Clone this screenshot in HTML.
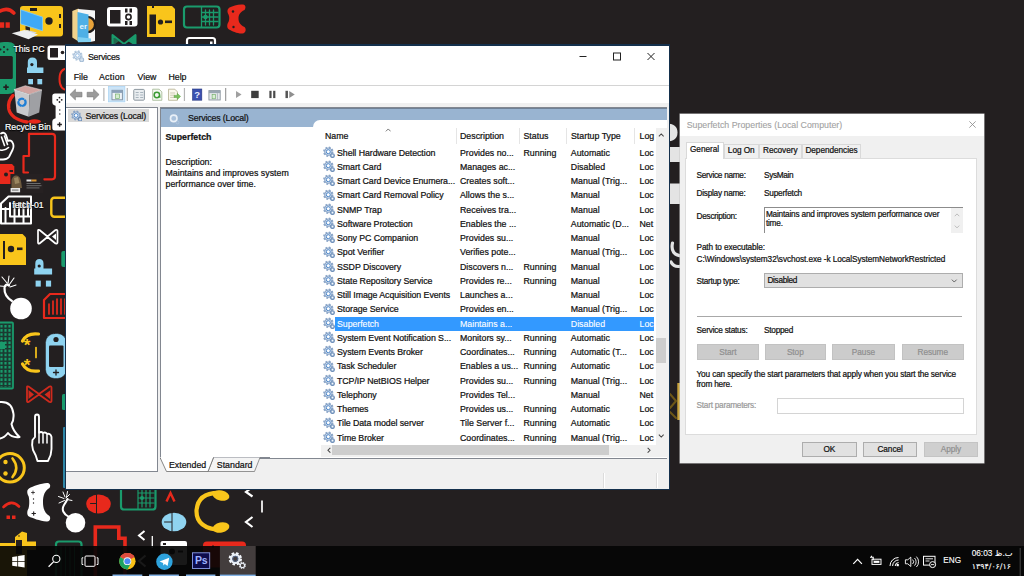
<!DOCTYPE html>
<html lang="en"><head><meta charset="utf-8"><title>Services</title>
<style>
html,body{margin:0;padding:0}
body{width:1024px;height:576px;overflow:hidden;background:#231f20;position:relative;font-family:"Liberation Sans",sans-serif;font-size:8.8px;color:#111;-webkit-text-stroke-width:.22px}
#desk{position:absolute;left:0;top:0;width:1024px;height:576px;overflow:hidden}
#desk svg.wall{position:absolute;left:0;top:0}
.dl{position:absolute;color:#fff;font-size:8.7px;text-align:center;white-space:nowrap;text-shadow:0 0 2px #000,0 1px 1px #000}
span,i,b,p{white-space:nowrap}
#svc{position:absolute;left:65px;top:44px;width:603px;height:444px;border:1px solid #14304c;background:#f0f0f0;overflow:hidden}
#svc .tb{position:absolute;left:0;top:0;width:603px;height:23px;background:#fff}
#svc .ttl{position:absolute;left:22px;top:6.5px;font-size:8.8px;letter-spacing:-.25px;line-height:11px}
#svc .ticon{position:absolute;left:6px;top:4.800px;width:12.500px;height:12.500px}
#svc .tb:before{content:"";position:absolute;left:0;top:0;width:603px;height:.7px;background:#14304c}
#svc .wc{position:absolute;left:500.200px;top:0;width:90px;height:23px}
#svc .menu{position:absolute;left:0;top:23px;width:603px;height:17.3px;background:#fff;border-bottom:1px solid #d4d4d4}
#svc .menu span{position:absolute;top:3.5px;line-height:11px}
#svc .tool{position:absolute;left:0;top:41.300px;width:603px;height:17.2px;background:#fff}
#svc .tool svg{position:absolute;left:0;top:0}
.tree{position:absolute;left:0;top:62.3px;width:90.500px;height:363px;background:#fff;border:1px solid #828790;border-left:0}
.tsel{position:absolute;left:2.4px;top:1px;width:80.600px;height:13px;background:#d9d9d9}
.g{position:absolute;left:10px;top:.2px;width:12px;height:12px}
.ttext{position:absolute;left:19.600px;top:2.4px;line-height:11px;letter-spacing:-.16px}
.rp{position:absolute;left:94px;top:62.3px;width:506px;height:349.500px;background:#fff;border:1px solid #828790;border-right:0}
.rph{position:absolute;left:0;top:0;width:506px;height:18.700px;background:#99b4d1;border-top:1px solid #6f8196;box-sizing:border-box}
.rph span{position:absolute;left:27px;top:4.2px;line-height:11px;letter-spacing:-.16px}
.rph .circ{position:absolute;left:7px;top:3.5px;width:13px;height:13px}
.desc{position:absolute;left:4.500px;top:23.5px;line-height:11px}
.desc b{font-size:8.8px}
.desc p{margin:13.8px 0 0 0;line-height:11px}
.list{position:absolute;left:152px;top:11.700px;width:354px;height:337.800px;background:#fff;border-top-left-radius:7px;overflow:hidden}
.hdr{position:absolute;left:0;top:0;width:355px;height:25px}
.hdr span{position:absolute;top:10.8px;line-height:11px}
.hdr i{position:absolute;top:8.5px;width:1px;height:16px;background:#e5e5e5}
.hdr .sort{position:absolute;left:71.5px;top:7.8px;width:6.5px;height:4px}
.row{position:absolute;left:0;width:342px;height:14.25px;line-height:14.25px}
.row span{position:absolute;top:0}
.c0{left:24px;letter-spacing:-.06px}.c1{left:147px}.c2{left:210.500px}.c3{left:257.800px}.c4{left:326.5px}
.row.sel:before{content:"";position:absolute;left:22.3px;top:.3px;width:318.700px;height:13.600px;background:#3399ff}
.row.sel span{color:#fff;-webkit-text-stroke-width:.1px}
.vs{position:absolute;left:342.500px;top:8px;width:11.500px;height:316.600px;background:#f0f0f0}
.vth{position:absolute;left:.5px;top:210.2px;width:10.400px;height:25.3px;background:#cdcdcd}
.va{position:absolute;left:2.2px;width:6.5px;height:4px}
.hs{position:absolute;left:8px;top:324.600px;width:346px;height:12px;background:#f0f0f0}
.hth{position:absolute;left:11.4px;top:.3px;width:276.600px;height:10.400px;background:#cdcdcd}
.ha{position:absolute;top:2.3px;width:4px;height:6.5px}
.tabs{position:absolute;left:94px;top:411.800px;width:110px;height:16px}
.tabt{position:absolute;top:414.500px;line-height:11px}
.sb{position:absolute;left:0;top:426.300px;width:603px;height:17px}
.sb i{position:absolute;top:1.5px;width:1px;height:15px;background:#dcdcdc;box-shadow:1px 0 0 #fff}
/* dialog */
#dlg{position:absolute;left:680px;top:114px;width:303.500px;height:348.500px;background:#f0f0f0;font-size:8.25px;letter-spacing:-.05px;box-shadow:0 0 0 .5px #c8c8c8}
.dtb{position:absolute;left:0;top:0;width:303.500px;height:22.3px;background:#fff}
.dtb span{position:absolute;left:6.7px;top:5.7px;line-height:11px;font-size:8.8px;color:#a3a3a3;letter-spacing:0;-webkit-text-stroke-width:.12px}
.dtb svg{position:absolute;left:287.500px;top:5.8px;width:9px;height:9px}
.dt{position:absolute;top:29.5px;height:14px;line-height:12.500px;text-align:center;border:1px solid #d9d9d9;border-bottom:0;box-sizing:border-box;background:#f0f0f0}
.dt.on{top:28px;height:16.500px;line-height:13.500px;background:#fff;z-index:2}
.page{position:absolute;left:5px;top:43.5px;width:291.500px;height:277.500px;background:#fff;box-shadow:inset 0 0 0 1px #dcdcdc}
.l{position:absolute;line-height:11px;letter-spacing:-.12px}
.l.w{letter-spacing:0}
.l.gray{color:#9a9a9a}
.dbox{position:absolute;left:78.900px;top:49.800px;width:199.400px;height:25.700px;border-top:1px solid #8c8c8c;border-left:1px solid #8c8c8c;background:#fff;box-sizing:border-box}
.dbox span{position:absolute;left:1px;top:1.3px;line-height:9.3px;white-space:nowrap;letter-spacing:-.2px}
.dsb{position:absolute;right:0;top:0;width:12px;height:24.700px;background:#f0f0f0}
.dsb svg{position:absolute;left:3px;width:6px;height:3.800px}
.combo{position:absolute;left:78.900px;top:115.600px;width:199.100px;height:15.3px;background:#e1e1e1;border:1px solid #adadad;box-sizing:border-box}
.combo span{position:absolute;left:2.5px;top:1.200px;line-height:11px;letter-spacing:-.3px}
.combo svg{position:absolute;left:186.500px;top:5px;width:6.5px;height:4px}
.sep{position:absolute;left:11.5px;top:158.800px;width:265.500px;height:1px;background:#a8a8a8}
.btn{position:absolute;text-align:center;box-sizing:border-box}
.btn.dis{background:#cccccc;color:#8f8f8f;border:.5px solid #c2c2c2}
.btn.ok{background:#e1e1e1;border:1px solid #adadad;color:#111}
.btn.dis2{background:#cfcfcf;color:#8f8f8f;border-color:#c4c4c4}
.inp{position:absolute;left:92.300px;top:240.200px;width:186.700px;height:16.700px;border:1px solid #d4d4d4;background:#fff;box-sizing:border-box}
/* taskbar */
#task{position:absolute;left:0;top:545.5px;width:1024px;height:30.500px;background:rgba(5,5,5,.92)}
#task svg.ts{position:absolute;left:0;top:0}
#task .eng{position:absolute;left:943.300px;top:9.700px;color:#fff;font-size:8.2px;-webkit-text-stroke-width:.1px;line-height:11px}
#task .clk{position:absolute;left:966px;width:46.500px;text-align:right;top:2.5px;color:#fff;font-size:8.3px;-webkit-text-stroke-width:.1px;line-height:11px;font-family:"Liberation Sans","DejaVu Sans",sans-serif}
#task .dat{position:absolute;left:966px;width:45px;text-align:right;top:15.8px;color:#fff;font-size:7.9px;-webkit-text-stroke-width:.1px;line-height:11px;font-family:"DejaVu Sans","Liberation Sans",sans-serif}

</style></head>
<body>
<div id="desk">
<svg class="wall" width="1024" height="576" viewBox="0 0 1024 576">
<g fill="none" stroke-linecap="round" stroke-linejoin="round">
<!-- top-left red sad face -->
<path d="M-1 11.500Q8 6.500 13.800 13" stroke="#e8291c" stroke-width="3.600"/>
<rect x="0" y="22.300" width="4.200" height="5.500" fill="#e8291c"/><rect x="5.600" y="22.300" width="4.200" height="5.500" fill="#e8291c"/>
<!-- yellow console -->
<rect x="20" y="6" width="43" height="30.500" rx="3" fill="#f9c51b"/>
<circle cx="49" cy="21" r="3.700" fill="#231f20"/><rect x="59" y="14" width="2" height="4" fill="#231f20"/><rect x="59" y="24" width="2" height="4" fill="#231f20"/><rect x="30" y="8" width="7" height="3" fill="#231f20"/>
<!-- this pc icon -->
<path d="M21 9.800L42.500 17.100V30.800L21 23.900Z" fill="#3fa9f5" stroke="#7fcbfa" stroke-width=".8"/>
<path d="M25.500 26L30 27.500V31L25.500 29.500Z" fill="#2a2626"/><path d="M27 30L37 32.500L33 34L24 31.500Z" fill="#d5d8da"/>
<path d="M11.700 33.200L24.500 30L38 34.500L28.500 39.300Z" fill="#eceeef"/>
<!-- folder icon -->
<path d="M72.300 11L78.500 8.500V41.500L72.300 37.500Z" fill="#f0d28c"/>
<path d="M78 9L95 10.500V41L90 42H78Z" fill="#f6f6f6"/>
<circle cx="87.500" cy="24.500" r="7.600" fill="#e8a33a" stroke="#1d1a1a" stroke-width="2.400"/>
<path d="M77.500 12L88.500 14.500V40.500L77.500 41.500Z" fill="#4eb0e6"/>
<path d="M78 37L91 38.500V42L78 42.300Z" fill="#7fd0f2"/>
<text x="83.300" y="29" font-family="Liberation Sans,sans-serif" font-size="8" font-weight="bold" fill="#e9f6fd" text-anchor="middle" stroke="none">er</text>
<!-- white handheld -->
<rect x="107" y="7" width="30.500" height="19.500" rx="3" fill="#fff"/>
<rect x="110" y="10" width="10.500" height="13.500" fill="#231f20"/><circle cx="128.500" cy="17" r="2.600" fill="#fff" stroke="#231f20" stroke-width="1.600"/>
<rect x="125" y="8.500" width="2.500" height="4" fill="#231f20"/><rect x="129.500" y="8.500" width="2.500" height="4" fill="#231f20"/><rect x="125" y="21" width="2.500" height="4" fill="#231f20"/><rect x="129.500" y="21" width="2.500" height="4" fill="#231f20"/>
<!-- yellow floppy -->
<path d="M147 6H172L175 9V37H147Z" fill="#f9c51b"/>
<rect x="149.500" y="14.500" width="6.500" height="19.500" fill="#231f20"/><circle cx="160.500" cy="22" r="2.600" fill="#231f20"/><rect x="165" y="20.500" width="7" height="2.600" fill="#231f20"/><rect x="152" y="6" width="2" height="2" fill="#231f20"/>
<!-- green mobile -->
<rect x="184" y="6.500" width="35.500" height="21" rx="3" stroke="#1a9b6c" stroke-width="2.200"/>
<path d="M201.500 7V27M205.500 10V25M209.500 10V25M213.500 10V25M202 12.500H218M202 17H218M202 21.500H218" stroke="#1a9b6c" stroke-width="1.300"/><circle cx="205.500" cy="17" r="2.300" fill="#1a9b6c"/>
<!-- red gamepad -->
<path d="M243 4.500C246 5 246 8 244.500 10C240 12 238.500 15 238.500 18.500C238.500 22 240 25 244.500 27C246.500 29 246 33 242.500 33.500C238 34 232 31 229 29.500C226.500 28 227 24 228.500 22C229.500 19 229.500 17 228.500 14.500C227 12 227 9 229.500 7.500C233 6 238 4 243 4.500Z" fill="#e8291c"/>
<circle cx="233" cy="11.500" r="1.200" fill="#231f20"/><circle cx="233.500" cy="27" r="1.200" fill="#231f20"/>
<!-- green hourglass rotated -->
<path d="M112.500 35L124 44L135.500 35V53L124 44L112.500 53Z" stroke="#1a9b6c" stroke-width="2"/><path d="M128 41L135.500 36V46Z" fill="#1a9b6c"/><path d="M112.500 36L119 41L112.500 46Z" fill="#1a9b6c" opacity=".6"/>
<!-- white handheld outline -->
<rect x="187" y="38" width="28" height="16" rx="2.500" stroke="#fff" stroke-width="2.200"/><rect x="210" y="41.500" width="2.500" height="2.500" fill="#fff"/>

<!-- left column -->
<!-- green psp vertical -->
<path d="M-4 49Q-4 42 4 42H8Q16 42 16 50V86Q16 94 8 94H-4Z" fill="#1a9b6c"/>
<rect x="-2" y="56" width="14.800" height="23" rx="1.500" fill="#231f20"/>
<circle cx="4" cy="47" r="1" fill="#231f20"/><circle cx="7.500" cy="49.500" r="1" fill="#231f20"/><circle cx="4" cy="52" r="1" fill="#231f20"/><circle cx=".5" cy="49.500" r="1" fill="#231f20"/>
<path d="M6 84.500V90M3.300 87.200H8.700" stroke="#231f20" stroke-width="1.700" stroke-linecap="butt"/>
<!-- :P top -->
<path d="M27.800 67.600V62Q27.800 57.400 32.400 57.400Q37 57.400 37 62V67.600H43.400V73H27V67.600Z" fill="#8fd3f0"/><circle cx="31.900" cy="64.600" r="1.600" fill="#231f20"/>
<rect x="28.200" y="79" width="4.800" height="5.300" fill="#8fd3f0"/><rect x="37.400" y="79" width="4.800" height="5.300" fill="#8fd3f0"/>
<!-- white handheld small -->
<rect x="47.500" y="45.500" width="26" height="14.500" rx="2.500" fill="#fff"/><rect x="50" y="48" width="8" height="9.500" fill="#231f20"/><circle cx="62.500" cy="52.500" r="1.800" fill="#231f20"/>
<!-- red outline -->
<path d="M68 68.500Q59.500 68.500 59.500 79Q59.500 90 68 90" stroke="#e8291c" stroke-width="2"/>
<!-- red headphone arc behind bin -->
<path d="M13 95.500Q7.500 101 8.800 109Q11 119 27 122" stroke="#e8291c" stroke-width="3.400"/>
<ellipse cx="34.500" cy="121.500" rx="6.500" ry="2.200" fill="#e8291c"/>
<!-- recycle bin -->
<path d="M14.300 89.500L25.300 85.700L42 90L29.600 94.300Z" fill="#d1a3a0"/>
<path d="M14.300 89.500L29.600 94.300L28.700 116.800L16.700 112.500Z" fill="#cfd0d3" opacity=".96"/>
<path d="M29.600 94.300L42 90L39.200 112.500L28.700 116.800Z" fill="#a4a6aa" opacity=".96"/>
<path d="M14.300 89.500L25.300 85.700L42 90L29.600 94.300Z" fill="none" stroke="#eee" stroke-width=".5"/>
<circle cx="22" cy="102.300" r="3.600" stroke="#1e7fd6" stroke-width="2.300" stroke-dasharray="4.500 2.200"/>
<!-- white gamepad right -->
<path d="M52.300 96Q52.300 93.400 55 93.400H70V130.500H55Q52.300 130.500 52.300 128V121.500Q52.300 119.500 54.300 118.800L55.600 118.300V105.800L54.300 105.300Q52.300 104.600 52.300 102.500Z" fill="#fff"/>
<circle cx="59.500" cy="97.600" r=".9" fill="#231f20"/><circle cx="59.500" cy="102" r=".9" fill="#231f20"/><circle cx="57.300" cy="99.800" r=".9" fill="#231f20"/><circle cx="61.700" cy="99.800" r=".9" fill="#231f20"/>
<circle cx="59.800" cy="110" r=".7" fill="#231f20"/><circle cx="59.800" cy="114" r=".7" fill="#231f20"/>
<path d="M57.300 124.500h4.600M59.600 122.200v4.600" stroke="#231f20" stroke-width="1.400" stroke-linecap="butt"/>
<!-- fist -->
<path d="M1 133.500Q4 131.500 6 135L8 141Q11 139.500 12.500 142.500Q14.500 146 12.500 150L9 157Q7 159.500 3 159.500H0" stroke="#fff" stroke-width="1.800"/>
<path d="M1.500 137L4.500 145.500M4.500 136L7.500 144.500M0 150Q5 151 8.500 147.500" stroke="#fff" stroke-width="1.600"/>
<!-- red tablet outline -->
<path d="M29 133.800H52Q55 133.800 55 136.800V176Q55 179.300 52 179.300H44M29 133.800V156H23.500V172.500H28" stroke="#e8291c" stroke-width="2.200"/>
<!-- red floppy partial -->
<path d="M0 164H12L14.300 166.500V184H0Z" fill="#e8291c"/><circle cx="6" cy="174.500" r="2" fill="#231f20"/><rect x="9.500" y="170" width="3.500" height="2" fill="#231f20"/>
<!-- fetch thumbnail -->
<rect x="10.400" y="174" width="33" height="19" fill="#262122"/>
<path d="M11.500 188V180Q13 175 16.500 175.500Q20 176 21 181L22 188Z" fill="#6e5a3e"/><path d="M14 178L18 177L19.500 183L15 184Z" fill="#9a8660"/>
<rect x="10.600" y="188" width="9.500" height="4.300" fill="#e6e6e6"/><rect x="12" y="189.300" width="6.500" height="1.600" fill="#9a9a9a"/>
<rect x="26.500" y="179.500" width="5" height="2" fill="#e2e2e2"/><rect x="31.500" y="179.500" width="5" height="2" fill="#d8932e"/><rect x="26.500" y="183" width="14" height="1" fill="#6c6c6c"/><rect x="26.500" y="185.200" width="15" height="1" fill="#6c6c6c"/><rect x="26.500" y="187.400" width="13" height="1" fill="#6c6c6c"/>
<!-- white grille -->
<path d="M1 203.500L8.500 196.500H31V223.500H1Z" stroke="#fff" stroke-width="2"/><path d="M5.500 208V223M10 203V216M14.500 203V223M19 203V216M23.500 203V223M28 203V216M1 209H10M10 216.500H31" stroke="#fff" stroke-width="2"/>
<!-- yellow outline -->
<rect x="51.300" y="197.800" width="22" height="19" rx="3" stroke="#f9c51b" stroke-width="2.400"/>
<!-- white hourglass -->
<path d="M38 230.500Q38 229.500 39.500 230L47.500 236.500L55.500 230Q57.500 229.500 57.500 231V242.500Q57.500 244 55.500 243.500L47.500 237L39.500 243.500Q38 244 38 242.500Z" stroke="#fff" stroke-width="1.700"/><path d="M52 236.500L56 233.500V240Z" fill="#fff"/>
<!-- yellow floppy 2 -->
<path d="M0 234H22.500L26 237.500V265H0Z" fill="#f9c51b"/><circle cx="11" cy="249" r="3.200" fill="#231f20"/><rect x="17" y="247.500" width="5.500" height="2.600" fill="#231f20"/><rect x="3" y="241" width="2" height="18" fill="#231f20"/>
<!-- green bit -->
<rect x="61.300" y="251" width="8" height="16" rx="2" fill="#1a9b6c"/>
<!-- :P 2 -->
<path d="M35.300 268.600V263.500Q35.300 258.900 39.400 258.900Q43.500 258.900 43.500 263.500V268.600H52.100V274.500H34.200V268.600Z" fill="#8fd3f0"/><circle cx="39.200" cy="266" r="1.600" fill="#231f20"/>
<rect x="35.600" y="280.600" width="5.200" height="6" fill="#8fd3f0"/><rect x="45.900" y="280.600" width="5.200" height="6" fill="#8fd3f0"/>
<!-- bomb -->
<circle cx="21" cy="308.500" r="10.800" fill="#fff"/><path d="M12 301Q4 296 4.500 288Q5 283 9 285.500" stroke="#fff" stroke-width="2.200"/>
<path d="M9 285L14 278M7 283L2 277M6 286.500L-1 286M10 287L16 285M8 283.500L9 276" stroke="#fff" stroke-width="1.100"/>
<!-- red sd card -->
<path d="M50 294H68V318H44V300Z" stroke="#e8291c" stroke-width="2.200"/><path d="M49 304V314M53 301V314M57 299V314M61 299V314M65 299V314" stroke="#e8291c" stroke-width="1.700"/>
<!-- green keyboard -->
<rect x="-2" y="322.500" width="15" height="66" rx="1" fill="#1b3a31" stroke="#1a9b6c" stroke-width="1.800"/>
<path d="M1.500 325V387M5.500 325V387M9.500 325V387" stroke="#1a9b6c" stroke-width="2.200" stroke-dasharray="2.600 1.500" stroke-linecap="butt"/>
<rect x="-1" y="342" width="6" height="7" fill="#1a9b6c"/>
<!-- yellow (*_*) -->
<path d="M38.500 334Q27 332.500 22.500 341M38.500 371Q27 372.500 22.500 364" stroke="#f9c51b" stroke-width="3.200"/><path d="M36 347.500V357.500" stroke="#f9c51b" stroke-width="1.700"/>
<text x="27" y="350.500" font-family="Liberation Sans,sans-serif" font-size="17" font-weight="bold" fill="#f9c51b" text-anchor="middle" stroke="none">*</text><text x="27" y="370.500" font-family="Liberation Sans,sans-serif" font-size="17" font-weight="bold" fill="#f9c51b" text-anchor="middle" stroke="none">*</text>
<!-- light blue psp -->
<rect x="45.500" y="333.500" width="21" height="45" rx="9" fill="#8fd3f0" stroke="#231f20" stroke-width=".5"/><rect x="49" y="345.500" width="14.500" height="21.500" rx="1" fill="#231f20"/>
<circle cx="56" cy="339.500" r="2.600" fill="#231f20"/><path d="M56 370v5M53.500 372.500h5" stroke="#231f20" stroke-width="1.300"/>
<!-- red hourglass -->
<path d="M27 387Q27 386 28.500 386.500L39 394L49.500 386.500Q51.500 386 51.500 387.500V401Q51.500 402.500 49.500 402L39 394.500L28.500 402Q27 402.500 27 401Z" stroke="#cf2a1d" stroke-width="1.800"/><path d="M44.500 394.500L50 390.500V399Z" fill="#cf2a1d"/><path d="M28.500 390L34 394.500L28.500 399Z" fill="#cf2a1d"/>
<!-- speech bubble -->
<path d="M0 402Q12 401 13.500 414Q14 420 11.500 424Q13 431 19.500 437Q12 438 8 433Q4 438 0 438.500" stroke="#fff" stroke-width="2"/>
<!-- pointing hand -->
<path d="M35 417Q35 414.500 37 414.500Q39 414.500 39 417V433Q41 431 43 433Q45.500 431.500 47 434Q50.500 433 51.500 437V449Q51.500 455 48 461H37.500Q36 455 33 450Q31.500 445 32.500 440L35 437Z" stroke="#fff" stroke-width="1.900"/><path d="M39 434V443M43 434V443M47 435V443" stroke="#fff" stroke-width="1.500"/>
<!-- yellow smiley -->
<circle cx="10" cy="467.800" r="14.300" stroke="#f9c51b" stroke-width="3"/><circle cx="5.500" cy="462" r="2.200" fill="#f9c51b"/><circle cx="5.500" cy="473.500" r="2.200" fill="#f9c51b"/><path d="M12.500 458.500Q20 468 12.500 477" stroke="#f9c51b" stroke-width="2.600"/>
<!-- white gamepad 2 -->
<path d="M47 483C50 482.500 51 486 49.500 488C45 490.500 43 495 43 502C43 509 45 513.500 49.500 516C51 518 50 522 46.500 521.500C40 521 32 518 29 516.500C26.500 515 27 511 28.500 508.500C29.500 505 29.500 499 28.500 496C27 493.500 26.500 490 29 488.500C33 486 41 483.500 47 483Z" fill="#fff"/>
<path d="M31.500 492.500h3M33 491v3" stroke="#231f20" stroke-width=".8"/><path d="M32 513.500h3.500M33.700 511.700v3.500" stroke="#231f20" stroke-width="1.100"/><circle cx="33.500" cy="499" r=".7" fill="#231f20"/><circle cx="33.500" cy="503" r=".7" fill="#231f20"/>
<!-- red sad 2 -->
<path d="M3.500 507Q11.500 499 19 506.500" stroke="#e8291c" stroke-width="2.600"/><rect x="6.500" y="515.500" width="3.500" height="3.500" fill="#e8291c"/><rect x="12" y="515.500" width="3.500" height="3.500" fill="#e8291c"/>
<!-- edge strips -->
<rect x="62" y="394" width="6" height="16" rx="1.500" fill="#1a9b6c"/>
<path d="M70 428H64V487H70" stroke="#2f86a6" stroke-width="2"/><path d="M64 434H70M64 440H70M64 446H70M64 452H70M64 458H70M64 464H70M64 470H70M64 476H70M64 482H70" stroke="#2f86a6" stroke-width=".8"/>

<!-- bottom strip -->
<circle cx="75.500" cy="522.800" r="9.800" fill="#fff"/><path d="M69 517Q60 512 64 505Q66 502 67.500 499" stroke="#fff" stroke-width="2"/>
<path d="M66 498L69.500 494.500M65 497L63 492M64 498.500L58.500 496.500M64.500 500.500L59 503M67 499.500L72 500.500M66.500 497L67.500 491.500" stroke="#fff" stroke-width="1"/>
<ellipse cx="98.500" cy="504" rx="12.300" ry="9.600" fill="#e8291c"/><path d="M96.500 494.500V513.500M90.500 503.500H96" stroke="#231f20" stroke-width="1"/>
<rect x="121" y="483" width="34.500" height="26.500" rx="3" stroke="#1a9b6c" stroke-width="2.200"/><path d="M138 484V509M142 490V507M146 490V507M150 490V507M138 493H154M138 498H154M138 503H154" stroke="#1a9b6c" stroke-width="1.200"/><circle cx="142" cy="498" r="2" fill="#1a9b6c"/>
<path d="M166.500 501.500L170.500 493L174.500 501.500" stroke="#e8291c" stroke-width="2.400" stroke-linejoin="miter" stroke-linecap="butt"/>
<ellipse cx="174" cy="522" rx="12.300" ry="9.300" fill="#8fd3f0"/><path d="M172 513V531M164.500 522H171.500" stroke="#231f20" stroke-width="1"/>
<!-- headphones -->
<path d="M222 493Q198 491.500 196.500 510.500Q196 529 222 530" stroke="#f9c51b" stroke-width="4.200"/>
<ellipse cx="221" cy="495.500" rx="8.500" ry="5" fill="#f9c51b" transform="rotate(12 221 495.500)"/><ellipse cx="221" cy="527.500" rx="8.500" ry="5" fill="#f9c51b" transform="rotate(-12 221 527.500)"/>
<!-- >_< -->
<path d="M252.500 487L246 492L252.500 496.500" stroke="#fff" stroke-width="2.200" stroke-linejoin="miter" stroke-linecap="butt"/><path d="M252.500 517L246 522L252.500 527" stroke="#fff" stroke-width="2.200" stroke-linejoin="miter" stroke-linecap="butt"/><path d="M262 500.500V512.500" stroke="#fff" stroke-width="1.700" stroke-linecap="butt"/>
<!-- red outline phone -->
<path d="M95.300 580V527H118.800V538.300H125V580" stroke="#e8291c" stroke-width="3.600" stroke-linejoin="miter"/>
<path d="M144.500 531L139 535.500L144.500 540" stroke="#fff" stroke-width="2" stroke-linejoin="miter" stroke-linecap="butt"/>
<path d="M145.500 555.500L139 561L145.500 566.500" stroke="#fff" stroke-width="2" stroke-linejoin="miter" stroke-linecap="butt"/><path d="M152.300 536V548" stroke="#fff" stroke-width="1.300" stroke-linecap="butt"/>
<!-- yellow joystick -->
<path d="M15 537L22 531.500L27 533V541.500H36V550H27V580H0V543H15Z" fill="#f9c51b"/><rect x="16" y="540" width="6" height="14" fill="#231f20"/><circle cx="19" cy="536" r=".8" fill="#231f20"/>
<!-- green outline -->
<rect x="56" y="541.500" width="25.500" height="40" rx="3" stroke="#1a9b6c" stroke-width="2.200"/><path d="M61 547V576M65.500 547V576M70 547V576M74.500 547V576" stroke="#1a9b6c" stroke-width="1"/>
<!-- white handheld bottom -->
<rect x="160.500" y="541" width="26.500" height="24" rx="2" fill="#fff"/><circle cx="172" cy="551.500" r="3" fill="#231f20"/><rect x="178" y="550.500" width="5" height="2" fill="#231f20"/><rect x="163" y="543" width="3" height="2" fill="#231f20"/>
<!-- red rounded -->
<rect x="203" y="541.500" width="43" height="26" rx="4" fill="#e8291c"/><rect x="212" y="545.500" width="2" height="2" fill="#231f20"/>

<!-- between windows -->
<path d="M666 123.500Q677.500 123.500 677.500 132.500Q677.500 141.500 666 141.500Z" fill="#e4e4e4"/>
<path d="M666 147H682V162H666Z" fill="#e4e4e4"/>
<path d="M666 183.500H682V204H666Z" fill="#e4e4e4"/>
<path d="M672.500 243Q670 255 682 256M671 262Q674 268 682 266" stroke="#e4e4e4" stroke-width="3.200"/>
<rect x="677.300" y="383" width="4" height="37" fill="#c9a33b"/><path d="M670 394L676 401L670 408M670 412L676 418" stroke="#6d5618" stroke-width="2"/>
</g>
</svg>

<div class="dl" style="left:4px;top:44px;width:50px">This PC</div>
<div class="dl" style="left:0px;top:122px;width:56px">Recycle Bin</div>
<div class="dl" style="left:2px;top:199.5px;width:52px">fetch-01</div>
</div>
<div id="svc">
<div class="tb"><span class="ttl">Services</span><svg class="ticon" viewBox="0 0 12 12"><circle cx="5.2" cy="5.300" r="3.900" fill="none" stroke="#b3c9df" stroke-width="2.200" stroke-dasharray="1.600 1.460"/><circle cx="5.2" cy="5.300" r="3.500" fill="#dbe7f3" stroke="#a5bdd6" stroke-width=".9"/><circle cx="5.2" cy="5.300" r="1.700" fill="#fff" stroke="#8db4de" stroke-width=".8"/><circle cx="9.300" cy="9.400" r="1.900" fill="#d3e1ef" stroke="#a5bdd6" stroke-width="1"/></svg><svg class="wc" viewBox="0 0 90 23"><path d="M13.5 11.5h7" stroke="#222" stroke-width="1" fill="none"/><rect x="47.5" y="8" width="7" height="7" fill="none" stroke="#222" stroke-width="1"/><path d="M81.5 8l7 7m0-7l-7 7" stroke="#222" stroke-width="1" fill="none"/></svg></div>
<div class="menu"><span style="left:7.7px">File</span><span style="left:33px;letter-spacing:.25px">Action</span><span style="left:71.5px">View</span><span style="left:102.4px">Help</span></div>
<div class="tool"><svg width="603" height="17.2" viewBox="0 0 603 17.2">
<!-- back / forward -->
<path d="M3.700 8.600L9.200 3.200V6.300H15.800V10.900H9.200V14Z" fill="#9b9b9b" stroke="#7d7d7d" stroke-width=".6"/>
<path d="M32.900 8.600L27.400 3.200V6.300H20.900V10.900H27.400V14Z" fill="#9b9b9b" stroke="#7d7d7d" stroke-width=".6"/>
<path d="M37.700 2V15" stroke="#b5b5b5" stroke-width="1.200"/>
<!-- highlighted show/hide tree -->
<rect x="42.400" y=".3" width="16.300" height="15.600" fill="#cce4f7" stroke="#a6d2f3" stroke-width=".7"/>
<rect x="45.800" y="4.300" width="10.400" height="9.500" fill="#eef3f7" stroke="#7c8ea0" stroke-width=".9"/>
<rect x="45.800" y="4.300" width="10.400" height="2.600" fill="#8aa0b8"/>
<rect x="49.500" y="8" width="3.800" height="4.700" fill="#d5ecd0" stroke="#6aa860" stroke-width=".6"/>
<path d="M61.100 2V15" stroke="#b5b5b5" stroke-width="1.200"/>
<!-- properties -->
<rect x="67.600" y="3.400" width="10.600" height="10.800" rx="1" fill="#e9edf0" stroke="#8c979f" stroke-width="1"/>
<path d="M69.500 6.500h3m1.500 0h3M69.500 9h3m1.500 0h3M69.500 11.500h3m1.500 0h3" stroke="#a8b4bd" stroke-width="1.200"/>
<!-- refresh -->
<path d="M86.500 3.200h6.500l2.700 2.700v8.400h-9.200z" fill="#f4f8f1" stroke="#9fb58f" stroke-width=".8"/>
<circle cx="90.700" cy="9" r="2.700" fill="none" stroke="#3a9a32" stroke-width="1.500"/>
<path d="M91.500 11.200l3 .6l-.7-3z" fill="#3a9a32"/>
<!-- export -->
<path d="M102.400 3.200h6.300l2.600 2.700v8.400h-8.900z" fill="#fbf9ee" stroke="#b3ad8d" stroke-width=".8"/>
<path d="M104 7h5M104 9.200h5M104 11.400h5" stroke="#c2c0a6" stroke-width=".8"/>
<path d="M108 9.400h3.200V7.400l3.200 3l-3.200 3v-2h-3.200z" fill="#7cc35e" stroke="#4e9a36" stroke-width=".5"/>
<path d="M118.300 2V15" stroke="#b5b5b5" stroke-width="1.200"/>
<!-- help -->
<rect x="126.400" y="3" width="9.300" height="11.200" fill="#3a50b0" stroke="#26367e" stroke-width=".6"/>
<text x="131.050" y="12.200" font-family="Liberation Sans,sans-serif" font-weight="bold" font-size="9.500" fill="#e8ecff" text-anchor="middle">?</text>
<!-- action pane -->
<rect x="142.800" y="4.600" width="11.300" height="9.400" fill="#e4e8ea" stroke="#8c979f" stroke-width=".9"/>
<rect x="142.800" y="4.600" width="11.300" height="2.500" fill="#9aa7b1"/>
<rect x="146" y="8.300" width="3.400" height="4.500" fill="#d9efd4" stroke="#6aa860" stroke-width=".6"/>
<path d="M151.300 7.200v6.600" stroke="#a3afb8" stroke-width=".8"/>
<path d="M159.600 2V15" stroke="#6b6b6b" stroke-width=".8"/>
<!-- play stop pause restart -->
<path d="M169.900 4.900L175.500 8.500L169.900 12.100Z" fill="#a0a0a0"/>
<rect x="185.100" y="4.800" width="7.500" height="7.300" fill="#3d3d3d"/>
<rect x="203.300" y="4.800" width="2.200" height="7.300" fill="#4a4a4a"/><rect x="207.100" y="4.800" width="2.200" height="7.300" fill="#4a4a4a"/>
<rect x="219.400" y="4.800" width="2.500" height="7.300" fill="#555"/><path d="M223.200 4.900L228.700 8.500L223.200 12.100Z" fill="#8f8f8f"/>
</svg>
</div>
<div class="tree"><div class="tsel"></div><svg class="g" style="left:4.5px;top:1.7px;width:11.5px;height:11.5px" viewBox="0 0 12 12"><circle cx="5.3" cy="5.7" r="4.1" fill="none" stroke="#8ba6c8" stroke-width="2.2" stroke-dasharray="1.7 1.52"/><circle cx="5.3" cy="5.7" r="3.7" fill="#d3e0ef" stroke="#7b99bf" stroke-width=".9"/><circle cx="5.3" cy="5.7" r="2" fill="#fdfeff" stroke="#4d86c8" stroke-width="1"/><circle cx="9.5" cy="9.6" r="1.9" fill="#b6cbe3" stroke="#6f8fb8" stroke-width="1.1"/><circle cx="9.5" cy="9.6" r=".6" fill="#fff"/></svg><span class="ttext">Services (Local)</span></div>
<div class="rp">
<div class="rph"><svg class="circ" viewBox="0 0 12 12"><circle cx="5.3" cy="5" r="3" fill="#a9c1dc" stroke="#e9f0f8" stroke-width="1.5"/><circle cx="8.8" cy="8.800" r="1.300" fill="none" stroke="#aec5de" stroke-width=".8"/></svg><span>Services (Local)</span></div>
<div class="desc"><b>Superfetch</b><p>Description:<br>Maintains and improves system<br>performance over time.</p></div>
<div class="list">
<div class="hdr"><span style="left:12px">Name</span><span style="left:147px">Description</span><span style="left:210.5px">Status</span><span style="left:258px">Startup Type</span><span style="left:326.5px">Log</span><i style="left:142.6px"></i><i style="left:205.8px"></i><i style="left:252.8px"></i><i style="left:321.4px"></i><svg class="sort" viewBox="0 0 8 5"><path d="M1 4.2L4 1.2L7 4.2" fill="none" stroke="#555" stroke-width="1"/></svg></div>
<div class="row" style="top:25.75px"><svg class="g" viewBox="0 0 12 12"><circle cx="5.3" cy="5.7" r="4.1" fill="none" stroke="#8ba6c8" stroke-width="2.2" stroke-dasharray="1.7 1.52"/><circle cx="5.3" cy="5.7" r="3.7" fill="#d3e0ef" stroke="#7b99bf" stroke-width=".9"/><circle cx="5.3" cy="5.7" r="2" fill="#fdfeff" stroke="#4d86c8" stroke-width="1"/><circle cx="9.5" cy="9.6" r="1.9" fill="#b6cbe3" stroke="#6f8fb8" stroke-width="1.1"/><circle cx="9.5" cy="9.6" r=".6" fill="#fff"/></svg><span class="c0">Shell Hardware Detection</span><span class="c1">Provides no...</span><span class="c2">Running</span><span class="c3">Automatic</span><span class="c4">Loc</span></div>
<div class="row" style="top:40.00px"><svg class="g" viewBox="0 0 12 12"><circle cx="5.3" cy="5.7" r="4.1" fill="none" stroke="#8ba6c8" stroke-width="2.2" stroke-dasharray="1.7 1.52"/><circle cx="5.3" cy="5.7" r="3.7" fill="#d3e0ef" stroke="#7b99bf" stroke-width=".9"/><circle cx="5.3" cy="5.7" r="2" fill="#fdfeff" stroke="#4d86c8" stroke-width="1"/><circle cx="9.5" cy="9.6" r="1.9" fill="#b6cbe3" stroke="#6f8fb8" stroke-width="1.1"/><circle cx="9.5" cy="9.6" r=".6" fill="#fff"/></svg><span class="c0">Smart Card</span><span class="c1">Manages ac...</span><span class="c2"></span><span class="c3">Disabled</span><span class="c4">Loc</span></div>
<div class="row" style="top:54.25px"><svg class="g" viewBox="0 0 12 12"><circle cx="5.3" cy="5.7" r="4.1" fill="none" stroke="#8ba6c8" stroke-width="2.2" stroke-dasharray="1.7 1.52"/><circle cx="5.3" cy="5.7" r="3.7" fill="#d3e0ef" stroke="#7b99bf" stroke-width=".9"/><circle cx="5.3" cy="5.7" r="2" fill="#fdfeff" stroke="#4d86c8" stroke-width="1"/><circle cx="9.5" cy="9.6" r="1.9" fill="#b6cbe3" stroke="#6f8fb8" stroke-width="1.1"/><circle cx="9.5" cy="9.6" r=".6" fill="#fff"/></svg><span class="c0">Smart Card Device Enumera...</span><span class="c1">Creates soft...</span><span class="c2"></span><span class="c3">Manual (Trig...</span><span class="c4">Loc</span></div>
<div class="row" style="top:68.50px"><svg class="g" viewBox="0 0 12 12"><circle cx="5.3" cy="5.7" r="4.1" fill="none" stroke="#8ba6c8" stroke-width="2.2" stroke-dasharray="1.7 1.52"/><circle cx="5.3" cy="5.7" r="3.7" fill="#d3e0ef" stroke="#7b99bf" stroke-width=".9"/><circle cx="5.3" cy="5.7" r="2" fill="#fdfeff" stroke="#4d86c8" stroke-width="1"/><circle cx="9.5" cy="9.6" r="1.9" fill="#b6cbe3" stroke="#6f8fb8" stroke-width="1.1"/><circle cx="9.5" cy="9.6" r=".6" fill="#fff"/></svg><span class="c0">Smart Card Removal Policy</span><span class="c1">Allows the s...</span><span class="c2"></span><span class="c3">Manual</span><span class="c4">Loc</span></div>
<div class="row" style="top:82.75px"><svg class="g" viewBox="0 0 12 12"><circle cx="5.3" cy="5.7" r="4.1" fill="none" stroke="#8ba6c8" stroke-width="2.2" stroke-dasharray="1.7 1.52"/><circle cx="5.3" cy="5.7" r="3.7" fill="#d3e0ef" stroke="#7b99bf" stroke-width=".9"/><circle cx="5.3" cy="5.7" r="2" fill="#fdfeff" stroke="#4d86c8" stroke-width="1"/><circle cx="9.5" cy="9.6" r="1.9" fill="#b6cbe3" stroke="#6f8fb8" stroke-width="1.1"/><circle cx="9.5" cy="9.6" r=".6" fill="#fff"/></svg><span class="c0">SNMP Trap</span><span class="c1">Receives tra...</span><span class="c2"></span><span class="c3">Manual</span><span class="c4">Loc</span></div>
<div class="row" style="top:97.00px"><svg class="g" viewBox="0 0 12 12"><circle cx="5.3" cy="5.7" r="4.1" fill="none" stroke="#8ba6c8" stroke-width="2.2" stroke-dasharray="1.7 1.52"/><circle cx="5.3" cy="5.7" r="3.7" fill="#d3e0ef" stroke="#7b99bf" stroke-width=".9"/><circle cx="5.3" cy="5.7" r="2" fill="#fdfeff" stroke="#4d86c8" stroke-width="1"/><circle cx="9.5" cy="9.6" r="1.9" fill="#b6cbe3" stroke="#6f8fb8" stroke-width="1.1"/><circle cx="9.5" cy="9.6" r=".6" fill="#fff"/></svg><span class="c0">Software Protection</span><span class="c1">Enables the ...</span><span class="c2"></span><span class="c3">Automatic (D...</span><span class="c4">Net</span></div>
<div class="row" style="top:111.25px"><svg class="g" viewBox="0 0 12 12"><circle cx="5.3" cy="5.7" r="4.1" fill="none" stroke="#8ba6c8" stroke-width="2.2" stroke-dasharray="1.7 1.52"/><circle cx="5.3" cy="5.7" r="3.7" fill="#d3e0ef" stroke="#7b99bf" stroke-width=".9"/><circle cx="5.3" cy="5.7" r="2" fill="#fdfeff" stroke="#4d86c8" stroke-width="1"/><circle cx="9.5" cy="9.6" r="1.9" fill="#b6cbe3" stroke="#6f8fb8" stroke-width="1.1"/><circle cx="9.5" cy="9.6" r=".6" fill="#fff"/></svg><span class="c0">Sony PC Companion</span><span class="c1">Provides su...</span><span class="c2"></span><span class="c3">Manual</span><span class="c4">Loc</span></div>
<div class="row" style="top:125.50px"><svg class="g" viewBox="0 0 12 12"><circle cx="5.3" cy="5.7" r="4.1" fill="none" stroke="#8ba6c8" stroke-width="2.2" stroke-dasharray="1.7 1.52"/><circle cx="5.3" cy="5.7" r="3.7" fill="#d3e0ef" stroke="#7b99bf" stroke-width=".9"/><circle cx="5.3" cy="5.7" r="2" fill="#fdfeff" stroke="#4d86c8" stroke-width="1"/><circle cx="9.5" cy="9.6" r="1.9" fill="#b6cbe3" stroke="#6f8fb8" stroke-width="1.1"/><circle cx="9.5" cy="9.6" r=".6" fill="#fff"/></svg><span class="c0">Spot Verifier</span><span class="c1">Verifies pote...</span><span class="c2"></span><span class="c3">Manual (Trig...</span><span class="c4">Loc</span></div>
<div class="row" style="top:139.75px"><svg class="g" viewBox="0 0 12 12"><circle cx="5.3" cy="5.7" r="4.1" fill="none" stroke="#8ba6c8" stroke-width="2.2" stroke-dasharray="1.7 1.52"/><circle cx="5.3" cy="5.7" r="3.7" fill="#d3e0ef" stroke="#7b99bf" stroke-width=".9"/><circle cx="5.3" cy="5.7" r="2" fill="#fdfeff" stroke="#4d86c8" stroke-width="1"/><circle cx="9.5" cy="9.6" r="1.9" fill="#b6cbe3" stroke="#6f8fb8" stroke-width="1.1"/><circle cx="9.5" cy="9.6" r=".6" fill="#fff"/></svg><span class="c0">SSDP Discovery</span><span class="c1">Discovers n...</span><span class="c2">Running</span><span class="c3">Manual</span><span class="c4">Loc</span></div>
<div class="row" style="top:154.00px"><svg class="g" viewBox="0 0 12 12"><circle cx="5.3" cy="5.7" r="4.1" fill="none" stroke="#8ba6c8" stroke-width="2.2" stroke-dasharray="1.7 1.52"/><circle cx="5.3" cy="5.7" r="3.7" fill="#d3e0ef" stroke="#7b99bf" stroke-width=".9"/><circle cx="5.3" cy="5.7" r="2" fill="#fdfeff" stroke="#4d86c8" stroke-width="1"/><circle cx="9.5" cy="9.6" r="1.9" fill="#b6cbe3" stroke="#6f8fb8" stroke-width="1.1"/><circle cx="9.5" cy="9.6" r=".6" fill="#fff"/></svg><span class="c0">State Repository Service</span><span class="c1">Provides re...</span><span class="c2">Running</span><span class="c3">Manual</span><span class="c4">Loc</span></div>
<div class="row" style="top:168.25px"><svg class="g" viewBox="0 0 12 12"><circle cx="5.3" cy="5.7" r="4.1" fill="none" stroke="#8ba6c8" stroke-width="2.2" stroke-dasharray="1.7 1.52"/><circle cx="5.3" cy="5.7" r="3.7" fill="#d3e0ef" stroke="#7b99bf" stroke-width=".9"/><circle cx="5.3" cy="5.7" r="2" fill="#fdfeff" stroke="#4d86c8" stroke-width="1"/><circle cx="9.5" cy="9.6" r="1.9" fill="#b6cbe3" stroke="#6f8fb8" stroke-width="1.1"/><circle cx="9.5" cy="9.6" r=".6" fill="#fff"/></svg><span class="c0">Still Image Acquisition Events</span><span class="c1">Launches a...</span><span class="c2"></span><span class="c3">Manual</span><span class="c4">Loc</span></div>
<div class="row" style="top:182.50px"><svg class="g" viewBox="0 0 12 12"><circle cx="5.3" cy="5.7" r="4.1" fill="none" stroke="#8ba6c8" stroke-width="2.2" stroke-dasharray="1.7 1.52"/><circle cx="5.3" cy="5.7" r="3.7" fill="#d3e0ef" stroke="#7b99bf" stroke-width=".9"/><circle cx="5.3" cy="5.7" r="2" fill="#fdfeff" stroke="#4d86c8" stroke-width="1"/><circle cx="9.5" cy="9.6" r="1.9" fill="#b6cbe3" stroke="#6f8fb8" stroke-width="1.1"/><circle cx="9.5" cy="9.6" r=".6" fill="#fff"/></svg><span class="c0">Storage Service</span><span class="c1">Provides en...</span><span class="c2"></span><span class="c3">Manual (Trig...</span><span class="c4">Loc</span></div>
<div class="row sel" style="top:196.75px"><svg class="g" viewBox="0 0 12 12"><circle cx="5.3" cy="5.7" r="4.1" fill="none" stroke="#8ba6c8" stroke-width="2.2" stroke-dasharray="1.7 1.52"/><circle cx="5.3" cy="5.7" r="3.7" fill="#d3e0ef" stroke="#7b99bf" stroke-width=".9"/><circle cx="5.3" cy="5.7" r="2" fill="#fdfeff" stroke="#4d86c8" stroke-width="1"/><circle cx="9.5" cy="9.6" r="1.9" fill="#b6cbe3" stroke="#6f8fb8" stroke-width="1.1"/><circle cx="9.5" cy="9.6" r=".6" fill="#fff"/></svg><span class="c0">Superfetch</span><span class="c1">Maintains a...</span><span class="c2"></span><span class="c3">Disabled</span><span class="c4">Loc</span></div>
<div class="row" style="top:211.00px"><svg class="g" viewBox="0 0 12 12"><circle cx="5.3" cy="5.7" r="4.1" fill="none" stroke="#8ba6c8" stroke-width="2.2" stroke-dasharray="1.7 1.52"/><circle cx="5.3" cy="5.7" r="3.7" fill="#d3e0ef" stroke="#7b99bf" stroke-width=".9"/><circle cx="5.3" cy="5.7" r="2" fill="#fdfeff" stroke="#4d86c8" stroke-width="1"/><circle cx="9.5" cy="9.6" r="1.9" fill="#b6cbe3" stroke="#6f8fb8" stroke-width="1.1"/><circle cx="9.5" cy="9.6" r=".6" fill="#fff"/></svg><span class="c0">System Event Notification S...</span><span class="c1">Monitors sy...</span><span class="c2">Running</span><span class="c3">Automatic</span><span class="c4">Loc</span></div>
<div class="row" style="top:225.25px"><svg class="g" viewBox="0 0 12 12"><circle cx="5.3" cy="5.7" r="4.1" fill="none" stroke="#8ba6c8" stroke-width="2.2" stroke-dasharray="1.7 1.52"/><circle cx="5.3" cy="5.7" r="3.7" fill="#d3e0ef" stroke="#7b99bf" stroke-width=".9"/><circle cx="5.3" cy="5.7" r="2" fill="#fdfeff" stroke="#4d86c8" stroke-width="1"/><circle cx="9.5" cy="9.6" r="1.9" fill="#b6cbe3" stroke="#6f8fb8" stroke-width="1.1"/><circle cx="9.5" cy="9.6" r=".6" fill="#fff"/></svg><span class="c0">System Events Broker</span><span class="c1">Coordinates...</span><span class="c2">Running</span><span class="c3">Automatic (T...</span><span class="c4">Loc</span></div>
<div class="row" style="top:239.50px"><svg class="g" viewBox="0 0 12 12"><circle cx="5.3" cy="5.7" r="4.1" fill="none" stroke="#8ba6c8" stroke-width="2.2" stroke-dasharray="1.7 1.52"/><circle cx="5.3" cy="5.7" r="3.7" fill="#d3e0ef" stroke="#7b99bf" stroke-width=".9"/><circle cx="5.3" cy="5.7" r="2" fill="#fdfeff" stroke="#4d86c8" stroke-width="1"/><circle cx="9.5" cy="9.6" r="1.9" fill="#b6cbe3" stroke="#6f8fb8" stroke-width="1.1"/><circle cx="9.5" cy="9.6" r=".6" fill="#fff"/></svg><span class="c0">Task Scheduler</span><span class="c1">Enables a us...</span><span class="c2">Running</span><span class="c3">Automatic</span><span class="c4">Loc</span></div>
<div class="row" style="top:253.75px"><svg class="g" viewBox="0 0 12 12"><circle cx="5.3" cy="5.7" r="4.1" fill="none" stroke="#8ba6c8" stroke-width="2.2" stroke-dasharray="1.7 1.52"/><circle cx="5.3" cy="5.7" r="3.7" fill="#d3e0ef" stroke="#7b99bf" stroke-width=".9"/><circle cx="5.3" cy="5.7" r="2" fill="#fdfeff" stroke="#4d86c8" stroke-width="1"/><circle cx="9.5" cy="9.6" r="1.9" fill="#b6cbe3" stroke="#6f8fb8" stroke-width="1.1"/><circle cx="9.5" cy="9.6" r=".6" fill="#fff"/></svg><span class="c0">TCP/IP NetBIOS Helper</span><span class="c1">Provides su...</span><span class="c2">Running</span><span class="c3">Manual (Trig...</span><span class="c4">Loc</span></div>
<div class="row" style="top:268.00px"><svg class="g" viewBox="0 0 12 12"><circle cx="5.3" cy="5.7" r="4.1" fill="none" stroke="#8ba6c8" stroke-width="2.2" stroke-dasharray="1.7 1.52"/><circle cx="5.3" cy="5.7" r="3.7" fill="#d3e0ef" stroke="#7b99bf" stroke-width=".9"/><circle cx="5.3" cy="5.7" r="2" fill="#fdfeff" stroke="#4d86c8" stroke-width="1"/><circle cx="9.5" cy="9.6" r="1.9" fill="#b6cbe3" stroke="#6f8fb8" stroke-width="1.1"/><circle cx="9.5" cy="9.6" r=".6" fill="#fff"/></svg><span class="c0">Telephony</span><span class="c1">Provides Tel...</span><span class="c2"></span><span class="c3">Manual</span><span class="c4">Net</span></div>
<div class="row" style="top:282.25px"><svg class="g" viewBox="0 0 12 12"><circle cx="5.3" cy="5.7" r="4.1" fill="none" stroke="#8ba6c8" stroke-width="2.2" stroke-dasharray="1.7 1.52"/><circle cx="5.3" cy="5.7" r="3.7" fill="#d3e0ef" stroke="#7b99bf" stroke-width=".9"/><circle cx="5.3" cy="5.7" r="2" fill="#fdfeff" stroke="#4d86c8" stroke-width="1"/><circle cx="9.5" cy="9.6" r="1.9" fill="#b6cbe3" stroke="#6f8fb8" stroke-width="1.1"/><circle cx="9.5" cy="9.6" r=".6" fill="#fff"/></svg><span class="c0">Themes</span><span class="c1">Provides us...</span><span class="c2">Running</span><span class="c3">Automatic</span><span class="c4">Loc</span></div>
<div class="row" style="top:296.50px"><svg class="g" viewBox="0 0 12 12"><circle cx="5.3" cy="5.7" r="4.1" fill="none" stroke="#8ba6c8" stroke-width="2.2" stroke-dasharray="1.7 1.52"/><circle cx="5.3" cy="5.7" r="3.7" fill="#d3e0ef" stroke="#7b99bf" stroke-width=".9"/><circle cx="5.3" cy="5.7" r="2" fill="#fdfeff" stroke="#4d86c8" stroke-width="1"/><circle cx="9.5" cy="9.6" r="1.9" fill="#b6cbe3" stroke="#6f8fb8" stroke-width="1.1"/><circle cx="9.5" cy="9.6" r=".6" fill="#fff"/></svg><span class="c0">Tile Data model server</span><span class="c1">Tile Server f...</span><span class="c2">Running</span><span class="c3">Automatic</span><span class="c4">Loc</span></div>
<div class="row" style="top:310.75px"><svg class="g" viewBox="0 0 12 12"><circle cx="5.3" cy="5.7" r="4.1" fill="none" stroke="#8ba6c8" stroke-width="2.2" stroke-dasharray="1.7 1.52"/><circle cx="5.3" cy="5.7" r="3.7" fill="#d3e0ef" stroke="#7b99bf" stroke-width=".9"/><circle cx="5.3" cy="5.7" r="2" fill="#fdfeff" stroke="#4d86c8" stroke-width="1"/><circle cx="9.5" cy="9.6" r="1.9" fill="#b6cbe3" stroke="#6f8fb8" stroke-width="1.1"/><circle cx="9.5" cy="9.6" r=".6" fill="#fff"/></svg><span class="c0">Time Broker</span><span class="c1">Coordinates...</span><span class="c2">Running</span><span class="c3">Manual (Trig...</span><span class="c4">Loc</span></div>
<div class="vs"><div class="vth"></div><svg class="va" style="top:5px" viewBox="0 0 8 5"><path d="M1 4.2L4 1.2L7 4.2" fill="none" stroke="#444" stroke-width="1.3"/></svg><svg class="va" style="top:306px" viewBox="0 0 8 5"><path d="M1 .8L4 3.8L7 .8" fill="none" stroke="#444" stroke-width="1.3"/></svg></div>
<div class="hs"><div class="hth"></div><svg class="ha" style="left:6px" viewBox="0 0 5 8"><path d="M4.2 1L1.2 4L4.2 7" fill="none" stroke="#444" stroke-width="1.3"/></svg><svg class="ha" style="left:326px" viewBox="0 0 5 8"><path d="M.8 1L3.8 4L.8 7" fill="none" stroke="#444" stroke-width="1.3"/></svg></div>
</div>
</div>
<svg class="tabs" viewBox="0 0 110 16"><path d="M0 .5H110" stroke="#828790" stroke-width="1"/><path d="M53.5 .5L48 14.5H94.500L100 .5" fill="#f4f4f4" stroke="#7a7a7a" stroke-width=".8"/><path d="M0 0L6.5 14.500H48L53.5 0Z" fill="#fff" stroke="none"/><path d="M0 .5L6.5 14.500H48L53.5 .5" fill="none" stroke="#6a6a6a" stroke-width=".8"/></svg>
<span class="tabt" style="left:103px">Extended</span><span class="tabt" style="left:150.8px">Standard</span>
<div class="sb"><i style="left:537px"></i><i style="left:590px"></i></div>
</div>
<div id="dlg">
<div class="dtb"><span>Superfetch Properties (Local Computer)</span><svg viewBox="0 0 10 10"><path d="M1.5 1.5l7 7m0-7l-7 7" stroke="#8a8a8a" stroke-width=".9" fill="none"/></svg></div>
<div class="dtabs"><span class="dt on" style="left:5.5px;width:38px">General</span><span class="dt" style="left:44px;width:34.5px">Log On</span><span class="dt" style="left:79px;width:42.5px">Recovery</span><span class="dt" style="left:122px;width:59px">Dependencies</span></div>
<div class="page">
<span class="l " style="left:11.5px;top:12.0px;letter-spacing:-0.272px">Service name:</span>
<span class="l " style="left:79px;top:12.0px;letter-spacing:-0.334px">SysMain</span>
<span class="l " style="left:11.5px;top:30.0px;letter-spacing:-0.252px">Display name:</span>
<span class="l " style="left:79px;top:30.0px;letter-spacing:-0.190px">Superfetch</span>
<span class="l " style="left:11.5px;top:53.0px;letter-spacing:-0.264px">Description:</span>
<div class="dbox"><span>Maintains and improves system performance over<br>time.</span><div class="dsb"><svg viewBox="0 0 8 5" style="top:5px"><path d="M1 4.2L4 1.2L7 4.2" fill="none" stroke="#aaa" stroke-width="1"/></svg><svg viewBox="0 0 8 5" style="top:16.5px"><path d="M1 .8L4 3.8L7 .8" fill="none" stroke="#aaa" stroke-width="1"/></svg></div></div>
<span class="l " style="left:11.5px;top:84.8px;letter-spacing:-0.118px">Path to executable:</span>
<span class="l w" style="left:11.5px;top:96.5px;letter-spacing:-0.077px">C:\Windows\system32\svchost.exe -k LocalSystemNetworkRestricted</span>
<span class="l " style="left:11.5px;top:118.0px;letter-spacing:-0.291px">Startup type:</span>
<div class="combo"><span>Disabled</span><svg viewBox="0 0 8 5"><path d="M1 .8L4 3.8L7 .8" fill="none" stroke="#444" stroke-width="1"/></svg></div>
<div class="sep"></div>
<span class="l " style="left:11.5px;top:167.7px;letter-spacing:-0.207px">Service status:</span>
<span class="l " style="left:79px;top:167.7px;letter-spacing:-0.249px">Stopped</span>
<span class="btn dis" style="left:12.0px;top:186.8px;width:61.6px;height:15.3px;line-height:15.3px">Start</span>
<span class="btn dis" style="left:79.5px;top:186.8px;width:61.6px;height:15.3px;line-height:15.3px">Stop</span>
<span class="btn dis" style="left:147.2px;top:186.8px;width:62.5px;height:15.3px;line-height:15.3px">Pause</span>
<span class="btn dis" style="left:217.0px;top:186.8px;width:61.5px;height:15.3px;line-height:15.3px">Resume</span>
<span class="l " style="left:11.5px;top:211.2px;letter-spacing:-0.139px">You can specify the start parameters that apply when you start the service</span>
<span class="l " style="left:11.5px;top:221.0px;letter-spacing:-0.211px">from here.</span>
<span class="l gray" style="left:11.5px;top:242.9px;letter-spacing:-0.250px">Start parameters:</span>
<div class="inp"></div>
</div>
<span class="btn ok" style="left:122.0px;top:328.0px;width:54.7px;height:15.2px;line-height:14px">OK</span>
<span class="btn ok" style="left:182.7px;top:328.0px;width:54.8px;height:15.2px;line-height:14px">Cancel</span>
<span class="btn ok dis2" style="left:243.8px;top:328.0px;width:54.4px;height:15.2px;line-height:14px">Apply</span>
</div>
<div id="task">
<svg class="ts" width="1024" height="30.5" viewBox="0 0 1024 30.5">
<rect x="219.900" y="0" width="35.800" height="28.500" fill="#433d3d"/>
<!-- start -->
<path d="M12.200 10.900L17.300 10.200V14.900H12.200ZM18.100 10.100L24.600 9.100V14.900H18.100ZM12.200 15.700H17.300V20.400L12.200 19.700ZM18.100 15.700H24.600V21.500L18.100 20.500Z" fill="#fff"/>
<!-- search -->
<circle cx="56.300" cy="12.900" r="3.600" fill="none" stroke="#fff" stroke-width="1.100"/><path d="M53.700 15.600L48.600 20.700" stroke="#fff" stroke-width="1.300"/>
<!-- task view -->
<rect x="85" y="10" width="10" height="10.300" rx="1" fill="none" stroke="#fff" stroke-width="1"/><path d="M83.300 11.800H82V18.500H83.300M96.700 11.800H98V18.500H96.700" fill="none" stroke="#fff" stroke-width="1"/>
<!-- chrome -->
<circle cx="127.400" cy="15.200" r="8.200" fill="#fbc116"/>
<path d="M127.400 15.200L120.300 11.100A8.200 8.200 0 0 1 134.500 11.100Z" fill="#dd4b3e"/>
<path d="M127.400 15.200L120.300 11.100A8.200 8.200 0 0 0 127.400 23.400L131 17.300Z" fill="#1da362"/>
<path d="M127.400 15.200m-7.100 -4.100A8.200 8.200 0 0 1 134.500 11.100H127.400Z" fill="#dd4b3e"/>
<circle cx="127.400" cy="15.200" r="3.900" fill="#f2f2f2"/><circle cx="127.400" cy="15.200" r="3" fill="#4a8af4"/>
<!-- telegram -->
<circle cx="164.400" cy="15.700" r="8.200" fill="#2ea3dd"/>
<path d="M159.600 15.600L169.200 11.700L167.600 19.900L164.800 17.900L163.400 19.400L163.100 16.900Z" fill="#fff"/>
<!-- photoshop -->
<rect x="192.500" y="6.800" width="17.200" height="15.700" fill="#0d0c4c" stroke="#8c9eea" stroke-width=".9"/>
<text x="201.100" y="18.400" font-family="Liberation Sans,sans-serif" font-size="10.500" font-weight="bold" fill="#9db3ff" text-anchor="middle" letter-spacing="-.3">Ps</text>
<!-- gear -->
<circle cx="235.300" cy="12.800" r="5" fill="none" stroke="#f4f7fb" stroke-width="3.400" stroke-dasharray="2.300 1.630"/>
<circle cx="235.300" cy="12.800" r="4.200" fill="none" stroke="#e8eef6" stroke-width="2.100"/>
<circle cx="235.300" cy="12.800" r="2.600" fill="#433d3d" stroke="#6f9be0" stroke-width=".5"/>
<circle cx="242.400" cy="19.400" r="2.500" fill="none" stroke="#f4f7fb" stroke-width="1.900" stroke-dasharray="1.200 .76"/>
<circle cx="242.400" cy="19.400" r="2.100" fill="#433d3d" stroke="#e8eef6" stroke-width="1.100"/>
<!-- underlines -->
<rect x="112.500" y="28.500" width="29.800" height="2" fill="#85b4e6"/><rect x="149" y="28.500" width="29.900" height="2" fill="#85b4e6"/><rect x="186" y="28.500" width="29.400" height="2" fill="#85b4e6"/><rect x="219.900" y="28.500" width="35.800" height="2" fill="#85b4e6"/>
<!-- tray -->
<path d="M853.300 17.800L857.600 13.300L861.900 17.800" fill="none" stroke="#fff" stroke-width="1.200"/>
<rect x="872" y="13.200" width="9" height="5.200" fill="none" stroke="#fff" stroke-width="1"/><rect x="873.600" y="14.700" width="5.800" height="2.200" fill="#fff"/><path d="M870 11.300h3.200v3M871.500 11v-1.200" stroke="#fff" stroke-width="1.100" fill="none"/>
<path d="M890 20A8.500 8.500 0 0 1 898.500 11.500" fill="none" stroke="#fff" stroke-width="1"/><path d="M892.600 20A6 6 0 0 1 898.600 14" fill="none" stroke="#fff" stroke-width="1"/><path d="M895.200 20A3.400 3.400 0 0 1 898.600 16.600" fill="none" stroke="#fff" stroke-width="1"/><rect x="896.600" y="18" width="2.200" height="2.200" fill="#fff"/>
<path d="M905.400 13.800h2.400l3-2.700v9.400l-3-2.700h-2.400z" fill="none" stroke="#fff" stroke-width=".9"/><path d="M912.600 13.600a3 3 0 0 1 0 4.400M914.500 12a5.300 5.300 0 0 1 0 7.600M916.400 10.600a7.300 7.300 0 0 1 0 10.400" fill="none" stroke="#fff" stroke-width=".9"/>
<rect x="923.500" y="10.300" width="11.500" height="8.800" fill="none" stroke="#fff" stroke-width="1"/><path d="M925.500 12.800h7.500M925.500 15h4" stroke="#fff" stroke-width=".9"/><circle cx="932.600" cy="18.600" r="3" fill="#0a0a0a" stroke="#fff" stroke-width="1"/><path d="M931 18.600h3.200" stroke="#fff" stroke-width=".9"/>
<path d="M1020.200 2V30" stroke="#555" stroke-width=".8"/>
</svg>

<span class="eng">ENG</span><span class="clk">06:03 ب.ظ</span><span class="dat">۱۳۹۴/۰۶/۱۶</span>
</div>
</body></html>
